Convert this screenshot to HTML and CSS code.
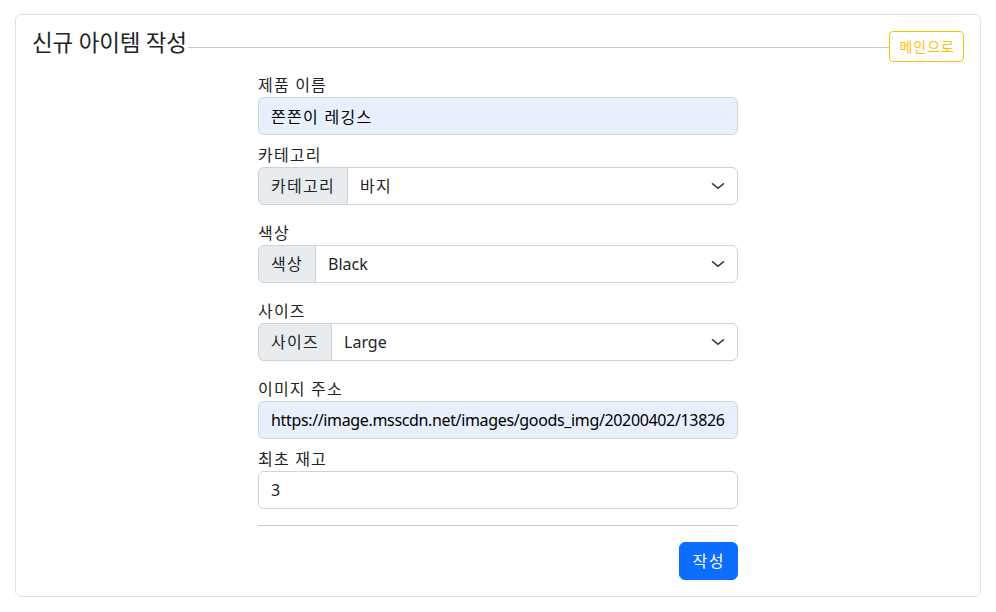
FILE: index.html
```html
<!DOCTYPE html>
<html lang="ko">
<head>
<meta charset="utf-8">
<title>신규 아이템 작성</title>
<link rel="stylesheet" href="styles.css">
</head>
<body>
<div class="card">
  <div class="card-head">
    <h4 class="card-title">신규 아이템 작성</h4>
    <div class="head-rule"></div>
    <button class="btn btn-outline-warning" type="button">메인으로</button>
  </div>
  <form class="item-form">
    <div class="field mb-2">
      <label class="form-label">제품 이름</label>
      <input class="form-control autofill ko" type="text" value="쫀쫀이 레깅스">
    </div>
    <div class="field mb-3">
      <label class="form-label">카테고리</label>
      <div class="input-group">
        <span class="input-group-text">카테고리</span>
        <div class="select-wrap">
          <select class="form-select ko"><option>바지</option></select>
          <svg class="chevron" viewBox="0 0 16 16" width="16" height="12" preserveAspectRatio="none"><path fill="none" stroke="#343a40" stroke-linecap="round" stroke-linejoin="round" stroke-width="1.7" d="m2.5 5 5.5 6 5.5-6"/></svg>
        </div>
      </div>
    </div>
    <div class="field mb-3">
      <label class="form-label">색상</label>
      <div class="input-group">
        <span class="input-group-text">색상</span>
        <div class="select-wrap">
          <select class="form-select"><option>Black</option></select>
          <svg class="chevron" viewBox="0 0 16 16" width="16" height="12" preserveAspectRatio="none"><path fill="none" stroke="#343a40" stroke-linecap="round" stroke-linejoin="round" stroke-width="1.7" d="m2.5 5 5.5 6 5.5-6"/></svg>
        </div>
      </div>
    </div>
    <div class="field mb-3">
      <label class="form-label">사이즈</label>
      <div class="input-group">
        <span class="input-group-text">사이즈</span>
        <div class="select-wrap">
          <select class="form-select"><option>Large</option></select>
          <svg class="chevron" viewBox="0 0 16 16" width="16" height="12" preserveAspectRatio="none"><path fill="none" stroke="#343a40" stroke-linecap="round" stroke-linejoin="round" stroke-width="1.7" d="m2.5 5 5.5 6 5.5-6"/></svg>
        </div>
      </div>
    </div>
    <div class="field mb-2">
      <label class="form-label">이미지 주소</label>
      <input class="form-control autofill tight" type="text" value="https://image.msscdn.net/images/goods_img/20200402/1382630/1382630_1_500.jpg">
    </div>
    <div class="field">
      <label class="form-label">최초 재고</label>
      <input class="form-control" type="text" value="3">
    </div>
    <hr class="form-rule">
    <div class="actions">
      <button class="btn btn-primary" type="submit">작성</button>
    </div>
  </form>
</div>
</body>
</html>
```
FILE: styles.css
```css
* { box-sizing: border-box; }
html, body { margin: 0; }
body {
  padding: 14px 15px 15px;
  font-family: "Noto Sans", "Noto Sans CJK KR", sans-serif;
  font-size: 16px;
  line-height: 1.5;
  color: #212529;
  background: #fff;
}
.card {
  border: 1px solid #dee2e6;
  border-radius: 6px;
  padding: 16px;
  background: #fff;
}
.card-head {
  display: flex;
  align-items: flex-start;
}
.card-title {
  margin: 0;
  font-size: 22.5px;
  font-weight: 400;
  line-height: 24px;
  letter-spacing: -0.2px;
  color: #212529;
}
.head-rule {
  flex: 1;
  height: 1px;
  background: #c8c9ca;
  align-self: center;
  margin-top: 1px;
  margin-left: 1px;
}
.btn {
  font-family: inherit;
  border: 1px solid transparent;
  border-radius: 4px;
  cursor: pointer;
  background: transparent;
}
.btn-outline-warning {
  color: #ffc107;
  border-color: #ffc107;
  font-size: 14px;
  line-height: 21px;
  padding: 4px 8px 4px 9px;
  letter-spacing: 1px;
}
.btn-primary {
  color: #fff;
  background: #0d6efd;
  border-color: #0d6efd;
  font-size: 16px;
  line-height: 24px;
  padding: 6px 12px 6px 13px;
  border-radius: 6px;
  letter-spacing: 1.5px;
}
.item-form {
  width: 480px;
  margin: 11px auto 0;
}
.field { display: flex; flex-direction: column; }
.mb-2 { margin-bottom: 8px; }
.mb-3 { margin-bottom: 16px; }
.form-label {
  display: block;
  line-height: 24px;
  letter-spacing: 1.2px;
}
.form-control, .form-select {
  font-family: inherit;
  font-size: 16px;
  line-height: 24px;
  color: #212529;
  padding: 6px 12px;
  border: 1px solid #ced4da;
  border-radius: 6px;
  background: #fff;
  width: 100%;
  height: 38px;
  margin: 0;
}
.form-control.autofill {
  background: #e8f0fe;
  color: #000;
}
.ko { letter-spacing: 1.3px; }
.tight { letter-spacing: -0.35px; }
.input-group {
  display: flex;
  align-items: stretch;
}
.input-group-text {
  display: flex;
  align-items: center;
  padding: 6px 12px;
  background: #e9ecef;
  border: 1px solid #ced4da;
  border-radius: 6px 0 0 6px;
  white-space: nowrap;
  line-height: 24px;
  height: 38px;
  letter-spacing: 1.3px;
}
.select-wrap {
  position: relative;
  flex: 1;
  margin-left: -1px;
}
.form-select {
  appearance: none;
  -webkit-appearance: none;
  border-radius: 0 6px 6px 0;
  padding-right: 36px;
}
.chevron {
  position: absolute;
  right: 12px;
  top: 13px;
  pointer-events: none;
}
.form-rule {
  margin: 16px 0;
  border: 0;
  border-top: 1px solid #c8c9ca;
  height: 0;
}
.actions {
  display: flex;
  justify-content: flex-end;
}
```
